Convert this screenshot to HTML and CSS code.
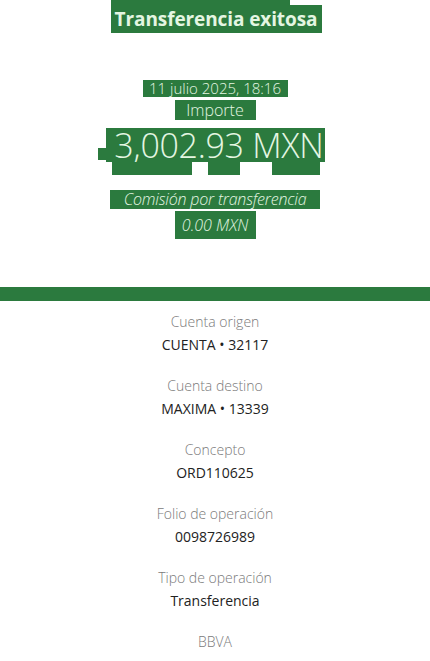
FILE: index.html
```html
<!DOCTYPE html>
<html lang="es">
<head>
<meta charset="utf-8">
<title>Transferencia exitosa</title>
<link rel="stylesheet" href="styles.css">
</head>
<body>
<main class="receipt">
  <section class="hero">
    <div class="title-wrap">
      <span class="title-cap"></span>
      <h1 class="title">Transferencia exitosa</h1>
    </div>
    <p class="date hl">11 julio 2025, 18:16</p>
    <p class="label-hl hl">Importe</p>
    <div class="amount-row">
      <span class="amount-nub"></span>
      <p class="amount hl">3,002.93 MXN</p>
    </div>
    <div class="amount-shadow">
      <span class="blk blk-a"></span>
      <span class="blk blk-b"></span>
      <span class="blk blk-c"></span>
    </div>
    <p class="fee hl">Comisión por transferencia</p>
    <p class="fee-val hl">0.00 MXN</p>
  </section>
  <div class="band"></div>
  <section class="details">
    <div class="row"><span class="lbl">Cuenta origen</span><span class="val">CUENTA • 32117</span></div>
    <div class="row"><span class="lbl">Cuenta destino</span><span class="val">MAXIMA • 13339</span></div>
    <div class="row"><span class="lbl">Concepto</span><span class="val">ORD110625</span></div>
    <div class="row"><span class="lbl">Folio de operación</span><span class="val">0098726989</span></div>
    <div class="row"><span class="lbl">Tipo de operación</span><span class="val">Transferencia</span></div>
    <div class="row row-last"><span class="lbl">BBVA</span></div>
  </section>
</main>
</body>
</html>
```
FILE: styles.css
```css
* { box-sizing: border-box; }
html, body { margin: 0; padding: 0; background: #ffffff; }
body {
  font-family: "Open Sans", "Liberation Sans", sans-serif;
  width: 430px;
  height: 661px;
  overflow: hidden;
}
.receipt { display: flex; flex-direction: column; }

.hero {
  display: flex;
  flex-direction: column;
  align-items: center;
  height: 287px;
}
.hl {
  background: #2b7a3e;
  color: #e4f6e2;
  margin: 0;
  display: inline-block;
}
.title-wrap {
  display: flex;
  flex-direction: column;
  align-items: flex-start;
  width: 211px;
  margin-left: 2px;
}
.title-cap {
  display: block;
  width: 179px;
  height: 5px;
  background: #2b7a3e;
}
.title {
  margin: 0;
  width: 211px;
  height: 28px;
  background: #2b7a3e;
  color: #e4f6e2;
  font-size: 19px;
  font-weight: 700;
  line-height: 28px;
  text-align: center;
  letter-spacing: -0.1px;
}
.date {
  margin-top: 47px;
  font-size: 15px;
  font-weight: 300;
  line-height: 17px;
  width: 145px;
  text-align: center;
}
.label-hl {
  margin-top: 3px;
  font-size: 16px;
  font-weight: 300;
  line-height: 20px;
  width: 81px;
  text-align: center;
}
.amount-row {
  display: flex;
  align-items: flex-end;
  margin-top: 8px;
  margin-left: -8px;
}
.amount-nub {
  display: block;
  width: 8px;
  height: 12px;
  margin-bottom: 2px;
  background: #2b7a3e;
}
.amount {
  font-size: 34px;
  font-weight: 300;
  line-height: 34px;
  width: 219px;
  text-align: right;
  padding-right: 1px;
  letter-spacing: -0.3px;
}
.amount-shadow {
  display: flex;
  width: 208px;
  height: 13px;
  margin-left: 2px;
}
.blk { display: block; height: 13px; background: #2b7a3e; }
.blk-a { width: 80px; }
.blk-b { width: 32px; margin-left: 16px; }
.blk-c { width: 48px; margin-left: 32px; }
.fee {
  margin-top: 15px;
  font-size: 16px;
  font-weight: 300;
  font-style: italic;
  line-height: 19px;
  width: 210px;
  text-align: center;
  letter-spacing: -0.2px;
}
.fee-val {
  margin-top: 2px;
  font-size: 16px;
  font-weight: 300;
  font-style: italic;
  line-height: 28px;
  width: 81px;
  text-align: center;
}
.band {
  height: 14px;
  background: #2b7a3e;
}
.details {
  display: flex;
  flex-direction: column;
  align-items: center;
  padding-top: 11px;
}
.row {
  display: flex;
  flex-direction: column;
  align-items: center;
  height: 64px;
}
.row-last { height: auto; }
.lbl {
  font-size: 14px;
  font-weight: 300;
  color: #7a7a7a;
  line-height: 20px;
}
.val {
  margin-top: 3px;
  font-size: 14px;
  font-weight: 400;
  color: #222222;
  line-height: 20px;
}
```
